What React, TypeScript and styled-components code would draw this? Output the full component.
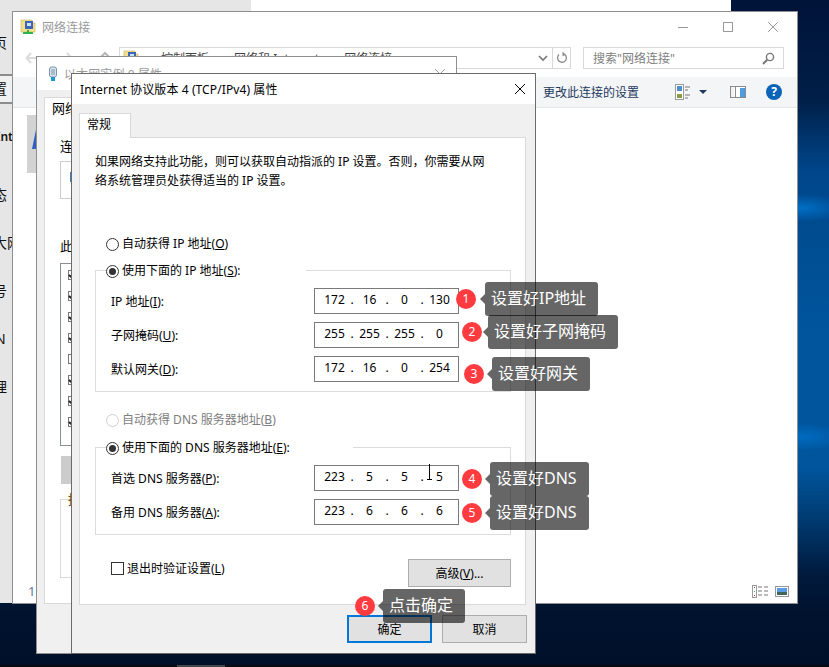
import React from "react";
import styled, { createGlobalStyle } from "styled-components";

const FONT = `"Noto Sans", "Noto Sans CJK SC", sans-serif`;

const Global = createGlobalStyle`
  html, body { margin: 0; padding: 0; background: #001230; }
  * { box-sizing: border-box; }
  body { font-family: ${FONT}; font-size: 12px; color: #000; }
`;

const Desktop = styled.div`
  position: relative;
  width: 829px;
  height: 667px;
  overflow: hidden;
  background:
    radial-gradient(ellipse 50px 14px at 800px 208px, rgba(0, 120, 210, 0.8), transparent),
    radial-gradient(ellipse 50px 14px at 800px 437px, rgba(0, 115, 205, 0.75), transparent),
    linear-gradient(to bottom, #001338 0, #001f48 100px, #00468a 170px, #00559c 330px, #00559c 468px, #003a70 520px, #001a3c 575px, #00122e 615px, #00102a 664px, #0a0a0c 666px);
`;

const TaskbarTab = styled.div`
  position: absolute;
  left: 177px;
  bottom: 0;
  width: 48px;
  height: 2px;
  background: #44474c;
`;

const BackWindow = styled.div`
  position: absolute;
  left: 0;
  top: 0;
  width: 731px;
  height: 603px;
  display: flex;
  background: #fff;
`;

const NavPane = styled.div`
  width: 251px;
  background: #e6e6e6;
  display: flex;
  flex-direction: column;
  padding-top: 33px;
`;

const NavRow = styled.div<{ $h: number; $band?: boolean; $shift?: number; $bold?: boolean }>`
  height: ${(p) => p.$h}px;
  line-height: ${(p) => (p.$band ? p.$h - 4 : p.$h)}px;
  font-size: ${(p) => (p.$bold ? 12 : 14)}px;
  color: #111;
  white-space: nowrap;
  text-indent: ${(p) => p.$shift ?? -7}px;
  font-weight: ${(p) => (p.$bold ? 600 : 400)};
  ${(p) => p.$band && `background:#f0f0f0;border-top:2px solid #8c8c8c;border-bottom:2px solid #8c8c8c;`}
`;

const Win = styled.div<{ $x: number; $y: number; $w: number; $h: number; $edge: string; $bg?: string }>`
  position: absolute;
  left: ${(p) => p.$x}px;
  top: ${(p) => p.$y}px;
  width: ${(p) => p.$w}px;
  height: ${(p) => p.$h}px;
  border: 1px solid ${(p) => p.$edge};
  background: ${(p) => p.$bg ?? "#fff"};
  display: flex;
  flex-direction: column;
  overflow: hidden;
`;

const TitleBar = styled.div<{ $h: number; $pad: number }>`
  height: ${(p) => p.$h}px;
  flex: none;
  background: #fff;
  display: flex;
  align-items: center;
  gap: 6px;
  padding: 0 ${(p) => p.$pad}px;
`;

const TitleText = styled.div<{ $dim?: boolean }>`
  font-size: 12px;
  color: ${(p) => (p.$dim ? "#9a9a9a" : "#000")};
  flex: 1;
  white-space: nowrap;
  letter-spacing: 0.1px;
`;

const Caption = styled.div`
  display: flex;
  align-items: center;
  gap: 35px;
  padding-right: 12px;
`;

const NavBar = styled.div`
  height: 35px;
  flex: none;
  display: flex;
  padding: 5px 13px 0 0;
`;

const Arrows = styled.div`
  width: 106px;
  height: 22px;
  flex: none;
  position: relative;
  padding: 4px 0 0 12px;
`;

const AddressBar = styled.div`
  width: 452px;
  height: 22px;
  border: 1px solid #d9d9d9;
  display: flex;
  align-items: center;
  padding-left: 3px;
  color: #222;
  font-size: 12px;
`;

const Crumbs = styled.div`
  flex: 1;
  display: flex;
  gap: 8.5px;
  white-space: nowrap;
  align-items: center;
  padding-left: 5.5px;
  color: #444;
`;

const Sep = styled.span`
  width: 8px;
  text-align: center;
  color: #888;
  font-size: 9px;
`;

const AddressTools = styled.div`
  width: 36px;
  height: 20px;
  display: flex;
  align-items: center;
`;

const RefreshCell = styled.div`
  width: 18px;
  height: 20px;
  border-left: 1px solid #d9d9d9;
  display: flex;
  align-items: center;
  justify-content: center;
`;

const SearchBox = styled.div`
  width: 201px;
  height: 22px;
  margin-left: 12px;
  border: 1px solid #d9d9d9;
  display: flex;
  align-items: center;
  justify-content: space-between;
  padding: 0 8px 0 9px;
  color: #808080;
  font-size: 12px;
`;

const Toolbar = styled.div`
  height: 31px;
  flex: none;
  background: #f4f5f7;
  border-bottom: 1px solid #e6e6e6;
  display: flex;
  align-items: center;
  padding-left: 530px;
  color: #1e3a5f;
  font-size: 12px;
  white-space: nowrap;
`;

const ToolbarLabel = styled.div`
  width: 132px;
`;

const ToolIcons = styled.div`
  display: flex;
  align-items: center;
  gap: 23px;
`;

const Help = styled.div`
  width: 16px;
  height: 16px;
  border-radius: 50%;
  background: #0a64b8;
  color: #fff;
  font-weight: 700;
  font-size: 12px;
  line-height: 16px;
  text-align: center;
  margin-left: -3px;
`;

const MainBody = styled.div`
  flex: 1;
  display: flex;
  padding: 7px 0 0 14px;
`;

const ItemTile = styled.div`
  width: 10px;
  height: 58px;
  background: #d3d3d3;
  padding: 10px 0 0 5px;
`;

const StatusBar = styled.div`
  height: 24px;
  flex: none;
  display: flex;
  align-items: center;
  justify-content: space-between;
  padding: 0 8px 0 15px;
  color: #5d7a9c;
  font-size: 13px;
`;

const StatusIcons = styled.div`
  display: flex;
  align-items: center;
  gap: 6px;
`;

/* second window */
const PropsBody = styled.div`
  flex: 1;
  background: #f0f0f0;
  padding: 7px 0 49px 7px;
  display: flex;
`;

const PropsPane = styled.div`
  flex: 1;
  background: #fff;
  border: 1px solid #d9d9d9;
  padding: 0 0 0 15px;
  display: flex;
  flex-direction: column;
  font-size: 13px;
`;

const PropsTabLabel = styled.div`
  height: 20px;
  line-height: 20px;
  margin-left: -8px;
`;

const PropsLabel = styled.div<{ $mt: number }>`
  margin-top: ${(p) => p.$mt}px;
  height: 20px;
  line-height: 20px;
`;

const ConnectBox = styled.div`
  margin-top: 5px;
  height: 38px;
  border: 1px solid #ccc;
  padding: 10px 0 0 9px;
`;

const MiniSquare = styled.div`
  width: 6px;
  height: 10px;
  background: #3d7fb8;
`;

const ListBox = styled.div`
  margin-top: 7px;
  height: 183px;
  border: 1px solid #8a8f9a;
  padding: 6px 0 0 7px;
  display: flex;
  flex-direction: column;
  gap: 11px;
`;

const MiniCheck = styled.div<{ $on: boolean }>`
  width: 11px;
  height: 10px;
  border: 1px solid #777;
  background: #fff;
  flex: none;
  position: relative;
  &::after {
    content: "";
    display: ${(p) => (p.$on ? "block" : "none")};
    position: absolute;
    left: 1px;
    top: 0;
    width: 5px;
    height: 6px;
    border-right: 2px solid #222;
    border-bottom: 2px solid #222;
    transform: rotate(40deg);
  }
`;

const GreyButton = styled.div`
  margin-top: 10px;
  height: 28px;
  background: #cccccc;
  margin-left: 1px;
`;

const DescBox = styled.div`
  margin-top: 15px;
  height: 79px;
  border: 1px solid #d9d9d9;
  position: relative;
`;

const DescLegend = styled.span`
  position: absolute;
  left: 7px;
  top: -10px;
  color: #7a4a10;
  line-height: 18px;
`;

/* dialog */
const DialogBody = styled.div`
  flex: 1;
  background: #f0f0f0;
  padding: 9px 9px 0 7px;
  display: flex;
  flex-direction: column;
`;

const Tab = styled.div`
  width: 52px;
  height: 25px;
  background: #fff;
  border: 1px solid #d9d9d9;
  border-bottom: none;
  padding-left: 7px;
  line-height: 22px;
  margin-bottom: -1px;
  position: relative;
  z-index: 1;
`;

const Pane = styled.div`
  height: 468px;
  flex: none;
  background: #fff;
  border: 1px solid #d9d9d9;
  padding: 14px 14px 0 15px;
  display: flex;
  flex-direction: column;
`;

const Desc = styled.div`
  line-height: 19px;
  width: 400px;
`;

const RadioRow = styled.div<{ $mt?: number; $dim?: boolean }>`
  display: flex;
  align-items: center;
  height: 18px;
  margin-top: ${(p) => p.$mt ?? 0}px;
  margin-left: 11px;
  gap: 3px;
  white-space: nowrap;
  color: ${(p) => (p.$dim ? "#7d7d7d" : "#000")};
`;

const RadioDot = styled.span<{ $on?: boolean; $dim?: boolean }>`
  width: 13px;
  height: 13px;
  flex: none;
  border-radius: 50%;
  border: 1px solid ${(p) => (p.$dim ? "#cfcfcf" : "#333")};
  background: #fff;
  margin-top: 3px;
  display: flex;
  align-items: center;
  justify-content: center;
  &::after {
    content: "";
    display: ${(p) => (p.$on ? "block" : "none")};
    width: 7px;
    height: 7px;
    border-radius: 50%;
    background: #333;
  }
`;

const Group = styled.div<{ $h: number; $mt: number }>`
  height: ${(p) => p.$h}px;
  margin-top: ${(p) => p.$mt}px;
  flex: none;
  border: 1px solid #dcdcdc;
  padding: 0 51px 0 15px;
  display: flex;
  flex-direction: column;
  gap: 8px;
`;

const Legend = styled(RadioRow)<{ $w: number }>`
  width: ${(p) => p.$w}px;
  margin-top: -10px;
  margin-bottom: 1px;
  margin-left: -5px;
  background: #fff;
  flex: none;
  position: relative;
`;

const FieldRow = styled.div`
  display: flex;
  justify-content: space-between;
  align-items: center;
  height: 26px;
  flex: none;
`;

const IpField = styled.div`
  position: relative;
  width: 145px;
  height: 26px;
  border: 1px solid #7a7a7a;
  display: flex;
  align-items: center;
  padding: 0 0 3px 4px;
  background: #fff;
`;

const Octet = styled.span`
  width: 31px;
  text-align: center;
`;

const Dot = styled.span`
  width: 4px;
  text-align: center;
`;

const Key = styled.u`
  text-underline-offset: 1px;
`;

const IBeam = styled.svg`
  position: absolute;
  left: 112px;
  top: -2px;
`;

const BottomRow = styled.div`
  margin-top: 24px;
  display: flex;
  justify-content: space-between;
  align-items: flex-start;
  padding-left: 16px;
`;

const CheckRow = styled.div`
  display: flex;
  align-items: center;
  gap: 3px;
  height: 18px;
`;

const CheckBox = styled.span`
  width: 13px;
  height: 13px;
  border: 1px solid #333;
  background: #fff;
`;

const Button = styled.div<{ $w: number; $primary?: boolean }>`
  width: ${(p) => p.$w}px;
  height: 28px;
  background: #e1e1e1;
  border: ${(p) => (p.$primary ? "2px solid #0078d7" : "1px solid #adadad")};
  display: flex;
  align-items: center;
  justify-content: center;
  padding-bottom: 1px;
`;

const DialogFooter = styled.div`
  display: flex;
  justify-content: flex-end;
  gap: 10px;
  padding-top: 10px;
  margin-right: -1px;
`;

const CloseGlyph = styled.svg`
  margin-right: 2px;
`;

/* annotations */
const Note = styled.div<{ $x: number; $y: number; $gap: number }>`
  position: absolute;
  left: ${(p) => p.$x}px;
  top: ${(p) => p.$y}px;
  display: flex;
  align-items: center;
  gap: ${(p) => p.$gap}px;
  z-index: 5;
`;

const Badge = styled.div`
  width: 20px;
  height: 20px;
  border-radius: 50%;
  background: #ff3b3f;
  color: #fff;
  font-size: 12px;
  line-height: 20px;
  text-align: center;
`;

const Bubble = styled.div`
  position: relative;
  height: 34px;
  padding: 0 12px 0 6px;
  line-height: 33px;
  background: rgba(0, 0, 0, 0.6);
  color: #fff;
  font-size: 16px;
  border-radius: 3px;
  white-space: nowrap;
  &::before {
    content: "";
    position: absolute;
    left: -5px;
    top: 12px;
    border-style: solid;
    border-width: 5px 5px 5px 0;
    border-color: transparent rgba(0, 0, 0, 0.6) transparent transparent;
  }
`;

const notes = [
  { n: 1, x: 456, y: 282, gap: 9, text: "设置好IP地址" },
  { n: 2, x: 462, y: 315, gap: 6, text: "设置好子网掩码" },
  { n: 3, x: 464, y: 357, gap: 8, text: "设置好网关" },
  { n: 4, x: 462, y: 462, gap: 8, text: "设置好DNS" },
  { n: 5, x: 462, y: 496, gap: 8, text: "设置好DNS" },
  { n: 6, x: 355, y: 589, gap: 8, text: "点击确定" },
];

const CloseIcon = ({ c = "#000", s = 10 }: { c?: string; s?: number }) => (
  <svg width={s} height={s} viewBox="0 0 10 10" fill="none" stroke={c} strokeWidth="1">
    <path d="M0.2 0.2L9.8 9.8M9.8 0.2L0.2 9.8" />
  </svg>
);

const NetIcon = () => (
  <svg width="16" height="16" viewBox="0 0 16 16">
    <path d="M1 1h11v3h3v9H1z" fill="#f2e08a" stroke="#c9b45c" strokeWidth="0.6" />
    <rect x="5" y="2" width="8" height="8" fill="#3d66b8" />
    <rect x="7" y="4" width="4" height="3" fill="#cfe0f5" />
    <path d="M3 14h10M8 11v3" stroke="#2fb24a" strokeWidth="2" />
  </svg>
);

const PlugIcon = () => (
  <svg width="10" height="16" viewBox="0 0 10 16">
    <rect x="1.5" y="1" width="7" height="10" rx="2" fill="#d6e4ee" stroke="#7d93a8" />
    <rect x="3.5" y="3" width="1" height="6" fill="#7d93a8" />
    <rect x="5.5" y="3" width="1" height="6" fill="#7d93a8" />
    <rect x="3" y="11" width="4" height="4" fill="#1c9ad0" />
  </svg>
);

const Field = ({ v, cursor }: { v: string[]; cursor?: boolean }) => (
  <IpField>
    <Octet>{v[0]}</Octet>
    <Dot>.</Dot>
    <Octet>{v[1]}</Octet>
    <Dot>.</Dot>
    <Octet>{v[2]}</Octet>
    <Dot>.</Dot>
    <Octet>{v[3]}</Octet>
    {cursor && (
      <IBeam width="5" height="16" viewBox="0 0 5 16">
        <path d="M2.5 0V15M0 15.5H5" stroke="#000" strokeWidth="1" />
      </IBeam>
    )}
  </IpField>
);

export default function App() {
  return (
    <Desktop>
      <Global />
      <TaskbarTab />

      <BackWindow>
        <NavPane>
          <NavRow $h={20}>页</NavRow>
          <NavRow $h={21} />
          <NavRow $h={30} $band>置</NavRow>
          <NavRow $h={20} />
          <NavRow $h={25} $shift={-4} $bold>Inte</NavRow>
          <NavRow $h={34} />
          <NavRow $h={24}>态</NavRow>
          <NavRow $h={24} />
          <NavRow $h={24}>大网</NavRow>
          <NavRow $h={24} />
          <NavRow $h={24}>号</NavRow>
          <NavRow $h={24} />
          <NavRow $h={24} $shift={-5}>N</NavRow>
          <NavRow $h={24} />
          <NavRow $h={24}>理</NavRow>
        </NavPane>
      </BackWindow>

      <Win $x={12} $y={11} $w={786} $h={593} $edge="#8f8f8f">
        <TitleBar $h={30} $pad={7}>
          <NetIcon />
          <TitleText $dim>网络连接</TitleText>
          <Caption>
            <svg width="10" height="10" viewBox="0 0 10 10"><path d="M0 5.5H10" stroke="#999" /></svg>
            <svg width="10" height="10" viewBox="0 0 10 10"><rect x="0.5" y="0.5" width="9" height="9" fill="none" stroke="#999" /></svg>
            <CloseIcon c="#999" />
          </Caption>
        </TitleBar>
        <NavBar>
          <Arrows>
            <svg width="94" height="14" viewBox="0 0 94 14" fill="none">
              <path d="M12 7H2M6 2L1.5 7L6 12" stroke="#dcdcdc" strokeWidth="2" />
              <path d="M36 7H46M42 2L46.5 7L42 12" stroke="#dcdcdc" strokeWidth="2" />
              <path d="M75 7L80 2L85 7" stroke="#b5b5b5" strokeWidth="2" />
            </svg>
          </Arrows>
          <AddressBar>
            <NetIcon />
            <Crumbs>
              <Sep>›</Sep><span>控制面板</span><Sep>›</Sep><span>网络和 Internet</span><Sep>›</Sep><span>网络连接</span>
            </Crumbs>
            <AddressTools>
              <svg width="18" height="14" viewBox="0 0 18 14" fill="none"><path d="M5 5L9 9L13 5" stroke="#777" strokeWidth="1.6" /></svg>
              <RefreshCell>
                <svg width="12" height="14" viewBox="0 0 12 14" fill="none">
                  <path d="M8.8 3.5A4.4 4.4 0 1 1 3 3.6" stroke="#8a8a8a" strokeWidth="1.3" />
                  <path d="M6.5 0.5L9.5 3.5L6.5 5.5z" fill="#8a8a8a" />
                </svg>
              </RefreshCell>
            </AddressTools>
          </AddressBar>
          <SearchBox>
            <span>搜索"网络连接"</span>
            <svg width="13" height="13" viewBox="0 0 13 13" fill="none">
              <circle cx="8" cy="5" r="3.6" stroke="#777" strokeWidth="1.4" />
              <path d="M5.2 7.8L1 12" stroke="#777" strokeWidth="2" />
            </svg>
          </SearchBox>
        </NavBar>
        <Toolbar>
          <ToolbarLabel>更改此连接的设置</ToolbarLabel>
          <ToolIcons>
            <svg width="32" height="16" viewBox="0 0 32 16">
              <rect x="0.5" y="0.5" width="8" height="15" fill="#fff" stroke="#9a9a9a" />
              <rect x="2" y="2" width="5" height="5" fill="#4f8fd0" />
              <rect x="2" y="10" width="5" height="4" fill="#8c9a45" />
              <path d="M10 3h5M10 6h3M10 11h5M10 14h3" stroke="#777" />
              <path d="M24 6h8l-4 4z" fill="#1f3a5f" />
            </svg>
            <svg width="16" height="12" viewBox="0 0 16 12">
              <rect x="0.5" y="0.5" width="15" height="11" fill="#fff" stroke="#8a8a8a" />
              <rect x="1" y="1" width="3" height="10" fill="#f2f2f2" />
              <rect x="10" y="2" width="5" height="9" fill="#4f9be0" />
              <path d="M5.5 1V11" stroke="#8a8a8a" />
            </svg>
            <Help>?</Help>
          </ToolIcons>
        </Toolbar>
        <MainBody>
          <ItemTile>
            <svg width="5" height="26" viewBox="0 0 5 26"><path d="M5 0V24H0z" fill="#2f5fc0" /></svg>
          </ItemTile>
        </MainBody>
        <StatusBar>
          <span>1</span>
          <StatusIcons>
            <svg width="17" height="13" viewBox="0 0 17 13">
              <rect x="0.5" y="0.5" width="4" height="12" fill="#fff" stroke="#999" />
              <rect x="2" y="2" width="1" height="1" fill="#555" />
              <rect x="2" y="6" width="1" height="1" fill="#4f8fd0" />
              <rect x="2" y="10" width="1" height="1" fill="#d33" />
              <path d="M6 2h4M12 2h4M6 6h4M12 6h4M6 10h4M12 10h4" stroke="#777" />
            </svg>
            <svg width="14" height="11" viewBox="0 0 14 11">
              <rect x="0.5" y="0.5" width="13" height="10" fill="#fff" stroke="#999" />
              <rect x="2" y="2" width="10" height="4" fill="#5a9be6" />
              <rect x="2" y="6" width="10" height="3" fill="#3f6658" />
            </svg>
          </StatusIcons>
        </StatusBar>
      </Win>

      <Win $x={36} $y={56} $w={421} $h={598} $edge="#8f8f8f">
        <TitleBar $h={33} $pad={11}>
          <PlugIcon />
          <TitleText $dim>以太网实例 0 属性</TitleText>
          <CloseIcon c="#999" />
        </TitleBar>
        <PropsBody>
          <PropsPane>
            <PropsTabLabel>网络</PropsTabLabel>
            <PropsLabel $mt={18}>连接时使用：</PropsLabel>
            <ConnectBox><MiniSquare /></ConnectBox>
            <PropsLabel $mt={37}>此连接使用下列项目：</PropsLabel>
            <ListBox>
              {[0, 1, 2, 3, 4, 5, 6, 7].map((i) => <MiniCheck key={i} $on={i !== 4} />)}
            </ListBox>
            <GreyButton />
            <DescBox><DescLegend>描述</DescLegend></DescBox>
          </PropsPane>
        </PropsBody>
      </Win>

      <Win $x={71} $y={73} $w={465} $h={581} $edge="#6b6b6b" $bg="#f0f0f0">
        <TitleBar $h={30} $pad={8}>
          <TitleText>Internet 协议版本 4 (TCP/IPv4) 属性</TitleText>
          <CloseGlyph width="10" height="10" viewBox="0 0 10 10" fill="none" stroke="#000"><path d="M0 0L10 10M10 0L0 10" /></CloseGlyph>
        </TitleBar>
        <DialogBody>
          <Tab>常规</Tab>
          <Pane>
            <Desc>如果网络支持此功能，则可以获取自动指派的 IP 设置。否则，你需要从网络系统管理员处获得适当的 IP 设置。</Desc>
            <RadioRow $mt={44}><RadioDot /><span>自动获得 IP 地址(<Key>O</Key>)</span></RadioRow>
            <Group $h={122} $mt={18}>
              <Legend $w={200}><RadioDot $on /><span>使用下面的 IP 地址(<Key>S</Key>):</span></Legend>
              <FieldRow><span>IP 地址(<Key>I</Key>):</span><Field v={["172", "16", "0", "130"]} /></FieldRow>
              <FieldRow><span>子网掩码(<Key>U</Key>):</span><Field v={["255", "255", "255", "0"]} /></FieldRow>
              <FieldRow><span>默认网关(<Key>D</Key>):</span><Field v={["172", "16", "0", "254"]} /></FieldRow>
            </Group>
            <RadioRow $mt={18} $dim><RadioDot $dim /><span>自动获得 DNS 服务器地址(<Key>B</Key>)</span></RadioRow>
            <Group $h={88} $mt={19}>
              <Legend $w={247}><RadioDot $on /><span>使用下面的 DNS 服务器地址(<Key>E</Key>):</span></Legend>
              <FieldRow><span>首选 DNS 服务器(<Key>P</Key>):</span><Field v={["223", "5", "5", "5"]} cursor /></FieldRow>
              <FieldRow><span>备用 DNS 服务器(<Key>A</Key>):</span><Field v={["223", "6", "6", "6"]} /></FieldRow>
            </Group>
            <BottomRow>
              <CheckRow><CheckBox /><span>退出时验证设置(<Key>L</Key>)</span></CheckRow>
              <Button $w={103}><span>高级(<Key>V</Key>)...</span></Button>
            </BottomRow>
          </Pane>
          <DialogFooter>
            <Button $w={85} $primary>确定</Button>
            <Button $w={85}>取消</Button>
          </DialogFooter>
        </DialogBody>
      </Win>

      {notes.map((n) => (
        <Note key={n.n} $x={n.x} $y={n.y} $gap={n.gap}>
          <Badge>{n.n}</Badge>
          <Bubble>{n.text}</Bubble>
        </Note>
      ))}
    </Desktop>
  );
}
